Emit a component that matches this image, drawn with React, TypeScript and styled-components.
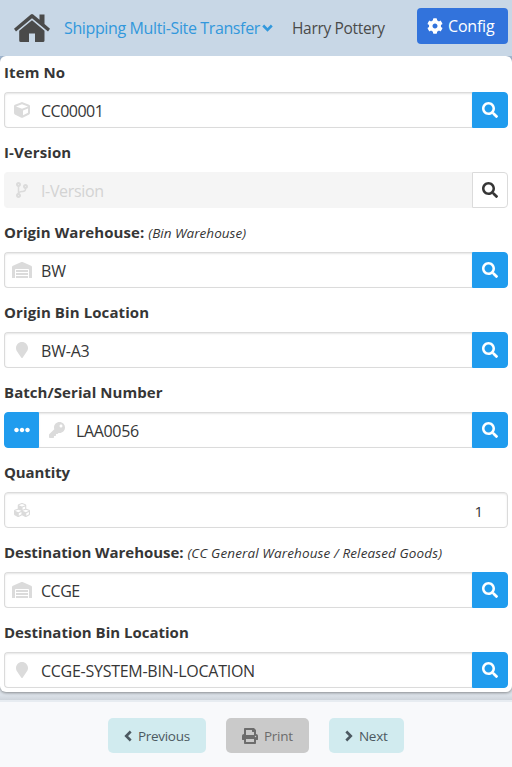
import React from "react";
import styled, { createGlobalStyle, css } from "styled-components";
import {
  FaCog, FaSearch, FaCube, FaCodeBranch, FaWarehouse, FaMapMarker, FaEllipsisH,
  FaKey, FaCubes, FaPrint,
} from "react-icons/fa";

const Global = createGlobalStyle`
  *, *::before, *::after { box-sizing: border-box; }
  html, body, #root { height: 100%; }
  body { margin: 0; overflow: hidden; background: #a3b9d2; color: #363636;
    font-family: "Open Sans", "Noto Sans", sans-serif; font-size: 15px; line-height: 24px; }
  button, input { font: inherit; margin: 0; }
`;

const Page = styled.div`
  display: flex;
  flex-direction: column;
  height: 767px;
  width: 512px;
`;

const Header = styled.header`
  display: flex;
  align-items: center;
  height: 56px;
  flex: none;
  padding: 0 4px 0 14px;
  background: #c8d7e6;
`;

const HomeIcon = styled.svg`
  width: 36px;
  height: 28px;
  flex: none;
  fill: #4a4a4a;
`;

const SiteMenu = styled.a`
  display: flex;
  align-items: center;
  width: 210px;
  margin: 0 0 0 14px;
  color: #3298dc;
  font-size: 16px;
  white-space: nowrap;
  letter-spacing: -0.37px;
  svg { margin: 0 0 0 2px; flex: none; }
`;

const UserName = styled.span`
  width: 107px;
  margin: 0 0 0 18px;
  color: #4a4a4a;
  font-size: 15.5px;
  white-space: nowrap;
  letter-spacing: -0.33px;
`;

const ConfigButton = styled.button`
  display: flex;
  align-items: center;
  width: 91px;
  height: 36px;
  margin: -4px 0 0 auto;
  padding: 0 0 0 10px;
  border: 0;
  border-radius: 4px;
  background: #3273dc;
  color: #fff;
  font-size: 16px;
  letter-spacing: -0.2px;
  svg { margin-right: 5px; }
`;

const Panel = styled.main`
  position: relative;
  height: 636px;
  flex: none;
  padding: 4px;
  border-radius: 6px;
  background: #fff;
  box-shadow: 0 1px 3px rgba(10, 10, 10, 0.4);
  clip-path: inset(0 0 -6px 0);
`;

const Field = styled.section`
  height: 80px;
`;

const Label = styled.label<{ $spacing: number }>`
  display: block;
  height: 32px;
  font-weight: 700;
  white-space: nowrap;
  letter-spacing: ${(p) => p.$spacing}px;
`;

const Hint = styled.em<{ $spacing: number }>`
  font-size: 13.5px;
  font-weight: 400;
  letter-spacing: ${(p) => p.$spacing}px;
`;

const Control = styled.div`
  display: flex;
  height: 36px;
`;

const InputBox = styled.div<{ $disabled?: boolean; $first: boolean; $last: boolean }>`
  display: flex;
  align-items: center;
  flex: 1;
  min-width: 0;
  border: 1px solid #dbdbdb;
  border-right-width: ${(p) => (p.$last ? 1 : 0)}px;
  border-left-width: ${(p) => (p.$first ? 1 : 0)}px;
  border-radius: ${(p) => `${p.$first ? 4 : 0}px ${p.$last ? "4px 4px" : "0 0"} ${p.$first ? 4 : 0}px`};
  box-shadow: inset 0 1px 2px rgba(10, 10, 10, 0.1);
  ${(p) => p.$disabled && css`
    border-color: #f5f5f5;
    background: #f5f5f5;
    box-shadow: none;
  `}
`;

const IconSlot = styled.span<{ $first: boolean }>`
  display: flex;
  justify-content: center;
  width: ${(p) => (p.$first ? 34 : 35)}px;
  flex: none;
  color: #dbdbdb;
`;

const TextInput = styled.input<{ $spacing: number; $right?: boolean }>`
  flex: 1;
  min-width: 0;
  height: 30px;
  margin-top: 2px;
  padding: 0 ${(p) => (p.$right ? 24 : 2)}px 0 2px;
  border: 0;
  outline: 0;
  background: transparent;
  color: #363636;
  font-size: ${(p) => (p.$right ? 15 : 16)}px;
  letter-spacing: ${(p) => p.$spacing}px;
  text-align: ${(p) => (p.$right ? "right" : "left")};
  &::placeholder { color: #d3d3d3; opacity: 1; }
`;

const Addon = styled.button<{ $left?: boolean; $plain?: boolean }>`
  display: flex;
  align-items: center;
  justify-content: center;
  flex: none;
  width: ${(p) => (p.$left ? 35 : 36)}px;
  padding: 0;
  border: 1px solid ${(p) => (p.$plain ? "#dbdbdb" : "#209cee")};
  border-radius: ${(p) => (p.$left ? "4px 0 0 4px" : "0 4px 4px 0")};
  background: ${(p) => (p.$plain ? "#fff" : "#209cee")};
  color: ${(p) => (p.$plain ? "#363636" : "#fff")};
`;

const Gutter = styled.div`
  display: flex;
  flex-direction: column;
  flex: none;
  margin-top: -8px;
  padding-top: 16px;
  background: linear-gradient(#dce2e9 0 11px, #ced4db 16px);
`;

const Footer = styled.footer`
  display: flex;
  justify-content: center;
  align-items: flex-start;
  gap: 20px;
  height: 67px;
  flex: none;
  padding-top: 16px;
  border-top: 2px solid #e7ecf1;
  background: #f8f9fb;
`;

const FooterButton = styled.button<{ $width: number; $muted?: boolean }>`
  display: flex;
  align-items: center;
  gap: 6px;
  width: ${(p) => p.$width}px;
  height: 35px;
  padding: 0 0 0 16px;
  border: 0;
  border-radius: 5px;
  background: ${(p) => (p.$muted ? "#cacaca" : "#d1ebef")};
  color: ${(p) => (p.$muted ? "#6c6c6c" : "#4c5961")};
  font-size: 13.5px;
  letter-spacing: -0.3px;
  white-space: nowrap;
  svg { flex: none; }
`;

const ArrowSvg = styled.svg`
  fill: none;
  stroke: currentColor;
  stroke-width: 2.6;
`;

const arrows = {
  left: { w: 8, h: 12, d: "M6.700 1.500 2.200 6 6.700 10.500" },
  right: { w: 8, h: 12, d: "M1.300 1.500 5.800 6 1.300 10.500" },
  down: { w: 11, h: 8, d: "M1.200 1.500 5.500 5.800 9.800 1.500" },
};

function Arrow({ to }: { to: keyof typeof arrows }) {
  const { w, h, d } = arrows[to];
  return <ArrowSvg width={w} height={h} viewBox={`0 0 ${w} ${h}`}><path d={d} /></ArrowSvg>;
}

type Item = {
  label: string; ls: number; hint?: string; hs?: number; value: string; vs: number;
  icon: React.ReactNode; disabled?: boolean; more?: boolean; numeric?: boolean;
};

const fields: Item[] = [
  { label: "Item No", ls: 0.1, value: "CC00001", vs: -0.5, icon: <FaCube size={16} /> },
  { label: "I-Version", ls: 0.1, value: "", vs: -0.35, icon: <FaCodeBranch size={16} />, disabled: true },
  { label: "Origin Warehouse:", ls: 0.08, hint: "(Bin Warehouse)", hs: 0.02, value: "BW", vs: 0, icon: <FaWarehouse size={20} /> },
  { label: "Origin Bin Location", ls: 0.1, value: "BW-A3", vs: -0.2, icon: <FaMapMarker size={16} /> },
  { label: "Batch/Serial Number", ls: 0.06, value: "LAA0056", vs: -0.35, icon: <FaKey size={16} />, more: true },
  { label: "Quantity", ls: -0.1, value: "1", vs: 0, icon: <FaCubes size={16} />, numeric: true },
  { label: "Destination Warehouse:", ls: -0.04, hint: "(CC General Warehouse / Released Goods)", hs: 0.12, value: "CCGE", vs: -0.5, icon: <FaWarehouse size={20} /> },
  { label: "Destination Bin Location", ls: 0, value: "CCGE-SYSTEM-BIN-LOCATION", vs: -0.27, icon: <FaMapMarker size={16} /> },
];

function FormField({ item }: { item: Item }) {
  return (
    <Field>
      <Label $spacing={item.ls}>
        {item.label}{item.hint && <> <Hint $spacing={item.hs ?? 0}>{item.hint}</Hint></>}
      </Label>
      <Control>
        {item.more && <Addon $left aria-label="More"><FaEllipsisH size={16} /></Addon>}
        <InputBox $disabled={item.disabled} $first={!item.more} $last={!!item.numeric}>
          <IconSlot $first={!item.more}>{item.icon}</IconSlot>
          <TextInput $spacing={item.vs} $right={item.numeric} defaultValue={item.value}
            placeholder={item.disabled ? item.label : undefined} disabled={item.disabled} />
        </InputBox>
        {!item.numeric && <Addon $plain={item.disabled} aria-label="Search"><FaSearch size={16} /></Addon>}
      </Control>
    </Field>
  );
}

export default function App() {
  return (
    <Page>
      <Global />
      <Header>
        <HomeIcon viewBox="0 0 36 28">
          <path d="M16.800 0.500Q18 -0.500 19.200 0.500L25.500 5.700V0.500h5v9.500l5.500 4.700-2 2.700L18 4.200 2 17.400 0 14.700Z" />
          <path d="M18 6.200 30.500 16.700v9.800q0 1.500-1.500 1.500H21v-8.500h-6V28H6.700q-1.500 0-1.500-1.500V16.700Z" />
        </HomeIcon>
        <SiteMenu>Shipping Multi-Site Transfer<Arrow to="down" /></SiteMenu>
        <UserName>Harry Pottery</UserName>
        <ConfigButton><FaCog size={16} />Config</ConfigButton>
      </Header>
      <Panel>{fields.map((f) => <FormField key={f.label} item={f} />)}</Panel>
      <Gutter>
        <Footer>
          <FooterButton $width={98}><Arrow to="left" />Previous</FooterButton>
          <FooterButton $width={83} $muted><FaPrint size={16} />Print</FooterButton>
          <FooterButton $width={75}><Arrow to="right" />Next</FooterButton>
        </Footer>
      </Gutter>
    </Page>
  );
}
